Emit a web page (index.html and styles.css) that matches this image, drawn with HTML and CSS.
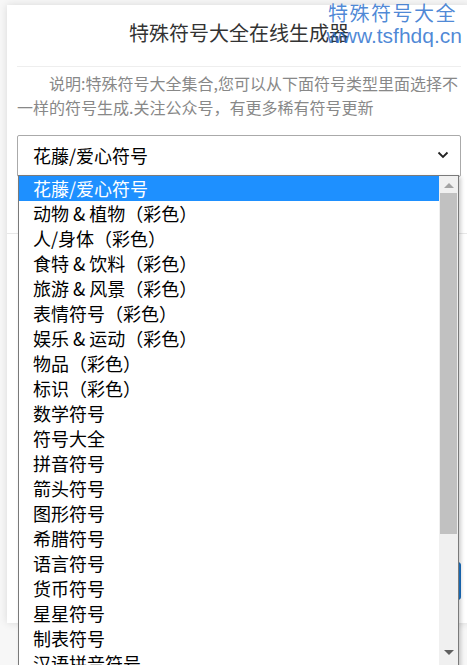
FILE: index.html
```html
<!DOCTYPE html>
<html lang="zh-CN">
<head>
    <meta charset="UTF-8">
    <meta name="viewport" content="width=device-width, initial-scale=1.0">
    <title>特殊符号大全在线生成器</title>
    <link rel="stylesheet" href="styles.css">
</head>
<body>
    <div class="watermark">
        <div class="wm-name">特殊符号大全</div>
        <div class="wm-url">www.tsfhdq.cn</div>
    </div>

    <div class="gen-container">
        <h1 class="gen-title">特殊符号大全在线生成器</h1>
        <p class="gen-desc">说明:特殊符号大全集合,您可以从下面符号类型里面选择不一样的符号生成.关注公众号，有更多稀有符号更新</p>

        <div class="select-wrap">
            <div class="form-select">
                <span>花藤/爱心符号</span>
                <svg class="chevron" width="12" height="8" viewBox="0 0 12 8"><path d="M1.5 1.5 L6 6 L10.5 1.5" fill="none" stroke="#222" stroke-width="1.8"/></svg>
            </div>

            <div class="dropdown">
                <ul class="option-list">
                    <li class="selected">花藤/爱心符号</li>
                    <li>动物 &amp; 植物（彩色）</li>
                    <li>人/身体（彩色）</li>
                    <li>食特 &amp; 饮料（彩色）</li>
                    <li>旅游 &amp; 风景（彩色）</li>
                    <li>表情符号（彩色）</li>
                    <li>娱乐 &amp; 运动（彩色）</li>
                    <li>物品（彩色）</li>
                    <li>标识（彩色）</li>
                    <li>数学符号</li>
                    <li>符号大全</li>
                    <li>拼音符号</li>
                    <li>箭头符号</li>
                    <li>图形符号</li>
                    <li>希腊符号</li>
                    <li>语言符号</li>
                    <li>货币符号</li>
                    <li>星星符号</li>
                    <li>制表符号</li>
                    <li>汉语拼音符号</li>
                </ul>
                <div class="scrollbar">
                    <span class="arrow-up"></span>
                    <div class="thumb"></div>
                    <span class="arrow-down"></span>
                </div>
            </div>
        </div>

        <div class="divider"></div>
        <div class="output-area"></div>
        <div class="btn-row">
            <button type="button" class="gen-btn">生成</button>
        </div>
    </div>
</body>
</html>
```

FILE: styles.css
```css
body {
    font-family: "Noto Sans CJK SC", "Liberation Sans", sans-serif;
    background: #f7f7f7;
    margin: 0;
    width: 467px;
    height: 665px;
    overflow: hidden;
}

.gen-container {
    background: #fff;
    width: 444px;
    height: 618px;
    margin: 5px 0 0 7px;
    padding: 0 10px;
    box-shadow: 0 0 8px rgba(0, 0, 0, 0.12);
}

.gen-title {
    margin: 0;
    height: 61px;
    line-height: 56px;
    font-size: 20px;
    font-weight: normal;
    color: #333;
    text-align: center;
    border-bottom: 1px solid #eee;
}

.gen-desc {
    margin: 4px 0 0;
    text-indent: 32px;
    font-size: 16px;
    line-height: 24px;
    color: #888;
    margin-right: -4px;
}

.select-wrap {
    position: relative;
    margin-top: 16px;
}

.form-select {
    height: 38px;
    border: 1px solid #aaa;
    border-radius: 2px;
    display: flex;
    align-items: center;
    justify-content: space-between;
    padding: 0 11px 2px 15px;
    font-size: 18px;
    color: #000;
}

.dropdown {
    position: absolute;
    left: 1px;
    top: 40px;
    width: 439px;
    height: 500px;
    background: #fff;
    border: 1px solid #7a7a7a;
    display: flex;
    z-index: 5;
    box-shadow: 2px 2px 4px rgba(0, 0, 0, 0.2);
}

.option-list {
    list-style: none;
    margin: 0;
    padding: 0;
    flex: 1;
}

.option-list li {
    height: 25px;
    line-height: 24px;
    padding-left: 14px;
    font-size: 18px;
    color: #000;
}

.option-list li.selected {
    background: #1e90ff;
    color: #fff;
}

.scrollbar {
    width: 19px;
    background: #f0f0f0;
    display: flex;
    flex-direction: column;
    align-items: center;
}

.arrow-up, .arrow-down {
    width: 0;
    height: 0;
    border-left: 5px solid transparent;
    border-right: 5px solid transparent;
}

.arrow-up {
    margin: 7px 0 5px;
    border-bottom: 5px solid #a3a3a3;
}

.arrow-down {
    margin-top: 116px;
    border-top: 5px solid #606060;
}

.thumb {
    width: 17px;
    height: 341px;
    background: #c1c1c1;
}

.divider {
    margin: 56px -10px 0;
    border-top: 1px solid #e8e8e8;
}

.output-area {
    height: 328px;
}

.btn-row {
    display: flex;
    justify-content: flex-end;
}

.gen-btn {
    width: 120px;
    height: 38px;
    border: 1px solid #1a6fc0;
    border-radius: 3px;
    background: #1e7dd3;
    color: #fff;
    font-size: 16px;
}

.watermark {
    position: absolute;
    top: 1px;
    left: 326px;
    z-index: 10;
    color: rgba(40, 110, 205, 0.82);
    text-align: right;
    width: 136px;
}

.wm-name {
    font-size: 20px;
    line-height: 24px;
    letter-spacing: 1.5px;
    margin-right: 5px;
}

.wm-url {
    font-family: "Liberation Sans", Arial, sans-serif;
    font-size: 21px;
    line-height: 22px;
}
```
